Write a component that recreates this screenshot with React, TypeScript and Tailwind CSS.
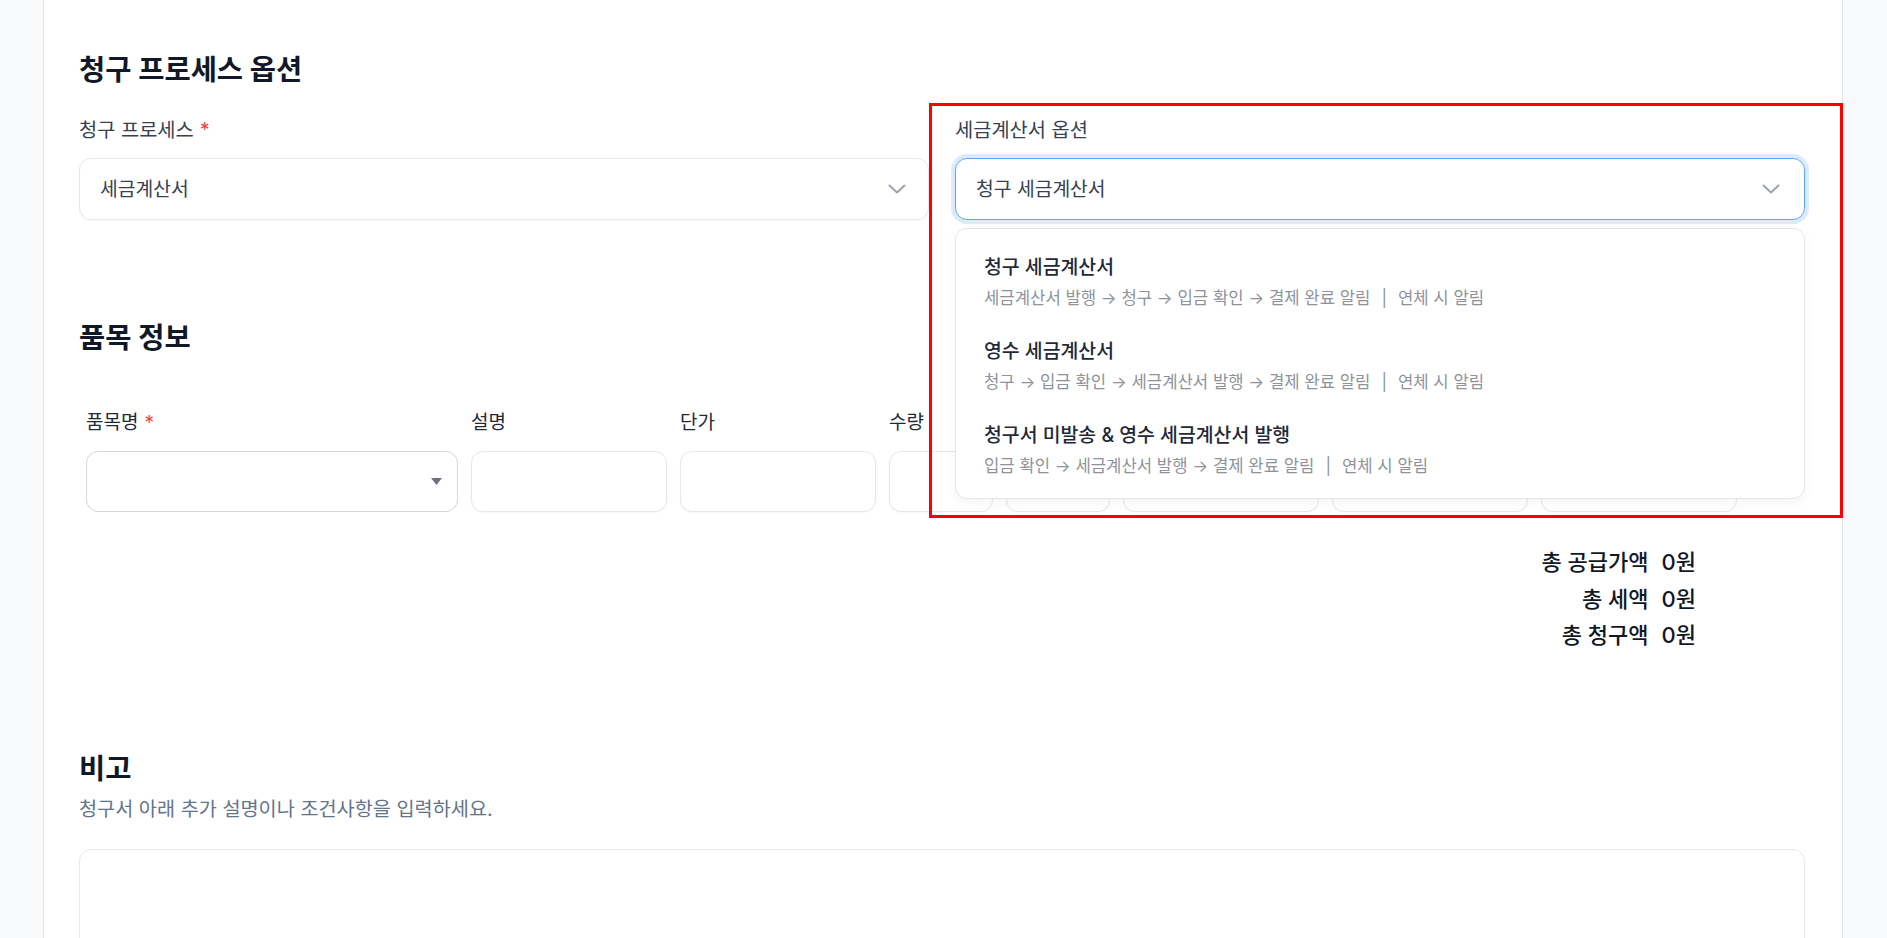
/**
 * Invoice form - billing process options with open tax invoice dropdown
 */

const font = "font-['Inter','Noto_Sans_CJK_KR',sans-serif]";

function Chevron() {
  return (
    <svg width="18" height="10" viewBox="0 0 18 10" fill="none" aria-hidden>
      <polyline
        points="1.5,1.5 9,8.5 16.5,1.5"
        stroke="#9ca3af"
        strokeWidth="2"
        strokeLinecap="round"
        strokeLinejoin="round"
      />
    </svg>
  );
}

function Label({ text, required }: { text: string; required?: boolean }) {
  return (
    <div className="text-[19.8px] leading-[27px] text-[#374151]">
      {text}
      {required && <span className="ml-[6px] text-[#ef4444]">*</span>}
    </div>
  );
}

const taxOptions = [
  {
    title: "청구 세금계산서",
    steps: "세금계산서 발행 → 청구 → 입금 확인 → 결제 완료 알림",
  },
  {
    title: "영수 세금계산서",
    steps: "청구 → 입금 확인 → 세금계산서 발행 → 결제 완료 알림",
  },
  {
    title: "청구서 미발송 & 영수 세금계산서 발행",
    steps: "입금 확인 → 세금계산서 발행 → 결제 완료 알림",
  },
];

/**
 * Tax invoice select, open state
 */
function TaxInvoiceSelect() {
  return (
    <div className="relative">
      <div className="flex h-[62px] items-center justify-between rounded-[12px] border border-[#60a5fa] bg-white pl-[20px] pr-[24px] ring-4 ring-[#dbeafe]">
        <span className="text-[19.3px] text-[#374151]">청구 세금계산서</span>
        <Chevron />
      </div>

      <div className="absolute left-0 right-0 top-[calc(100%+8px)] z-10 rounded-[12px] border border-[#e5e7eb] bg-white pt-[11px] pb-[6px] shadow-[0_4px_12px_rgba(0,0,0,0.04)]">
        {taxOptions.map((o) => (
          <div key={o.title} className="px-[28px] py-[14px]">
            <div className="text-[19.4px] font-medium leading-[27px] text-[#1f2937]">
              {o.title}
            </div>
            <div className="mt-[5px] text-[16.7px] leading-[24px] text-[#8e939b]">
              {o.steps}
              <span className="mx-[11px]">|</span>
              연체 시 알림
            </div>
          </div>
        ))}
      </div>
    </div>
  );
}

// last four headers sit under the open dropdown, so they carry no visible text
const itemCols = [
  { key: "name", label: "품목명", required: true },
  { key: "desc", label: "설명" },
  { key: "price", label: "단가" },
  { key: "qty", label: "수량" },
  { key: "unit", label: "" },
  { key: "supply", label: "" },
  { key: "tax", label: "" },
  { key: "total", label: "" },
];

export default function App() {
  return (
    <div className={`relative flex h-[938px] overflow-hidden bg-[#f8fafc] ${font}`}>
      {/* Left gutter */}
      <div className="w-[43px] flex-shrink-0" />

      {/* Main card */}
      <div className="w-[1800px] flex-shrink-0 border-x border-[#e2e4e9] bg-white pl-[35px] pr-[37px] pt-[52px]">
        {/* 청구 프로세스 옵션 */}
        <h2 className="text-[28.5px] font-bold leading-[36px] text-[#111827]">청구 프로세스 옵션</h2>

        <div className="mt-[29px] grid grid-cols-2 gap-x-[26px]">
          <div>
            <Label text="청구 프로세스" required />
            <div className="mt-[14px] flex h-[62px] items-center justify-between rounded-[12px] border border-[#e5e7eb] bg-white pl-[20px] pr-[22px] shadow-[0_1px_2px_rgba(0,0,0,0.04)]">
              <span className="text-[19.3px] text-[#374151]">세금계산서</span>
              <Chevron />
            </div>
          </div>
          <div>
            <Label text="세금계산서 옵션" />
            <div className="mt-[14px]">
              <TaxInvoiceSelect />
            </div>
          </div>
        </div>

        {/* 품목 정보 */}
        <h2 className="mt-[100px] text-[28.5px] font-bold leading-[36px] text-[#111827]">품목 정보</h2>

        <div className="mt-[53px] grid grid-cols-[372px_196px_196px_104px_104px_196px_196px_196px] gap-x-[13px] pl-[7px]">
          {itemCols.map((c) => (
            <div key={c.key} className="h-[27px] text-[19px] leading-[27px] text-[#1f2937]">
              {c.label}
              {c.required && <span className="ml-[6px] text-[#ef4444]">*</span>}
            </div>
          ))}
          {itemCols.map((c, i) =>
            i === 0 ? (
              <div
                key={c.key + "-input"}
                className="mt-[15px] flex h-[61px] items-center justify-end rounded-[12px] border border-[#d4d6dc] bg-white pr-[15px]"
              >
                <svg width="11" height="7" viewBox="0 0 11 7" aria-hidden>
                  <polygon points="0,0 11,0 5.5,7" fill="#6b7280" />
                </svg>
              </div>
            ) : (
              <div
                key={c.key + "-input"}
                className="mt-[15px] h-[61px] rounded-[12px] border border-[#e5e7eb] bg-white shadow-[0_1px_2px_rgba(0,0,0,0.03)]"
              />
            )
          )}
        </div>

        {/* Totals */}
        <div className="mt-[32px] mr-[109px] flex flex-col items-end text-[22px] font-medium leading-[36.5px] text-[#111827]">
          <div className="flex gap-[13px]">
            <span>총 공급가액</span>
            <span>0원</span>
          </div>
          <div className="flex gap-[13px]">
            <span>총 세액</span>
            <span>0원</span>
          </div>
          <div className="flex gap-[13px]">
            <span>총 청구액</span>
            <span>0원</span>
          </div>
        </div>

        {/* 비고 */}
        <h2 className="mt-[97px] text-[28.5px] font-bold leading-[36px] text-[#111827]">비고</h2>
        <p className="mt-[9px] text-[19.7px] leading-[27px] text-[#64748b]">
          청구서 아래 추가 설명이나 조건사항을 입력하세요.
        </p>
        <textarea className="mt-[26px] block h-[200px] w-full resize-none rounded-[12px] border border-[#e5e7eb] bg-white" />
      </div>

      {/* Right gutter */}
      <div className="flex-1" />

      {/* Highlight annotation */}
      <div className="pointer-events-none absolute left-[929px] top-[103px] z-20 h-[415px] w-[914px] border-[3px] border-[#ff0000]" />
    </div>
  );
}
